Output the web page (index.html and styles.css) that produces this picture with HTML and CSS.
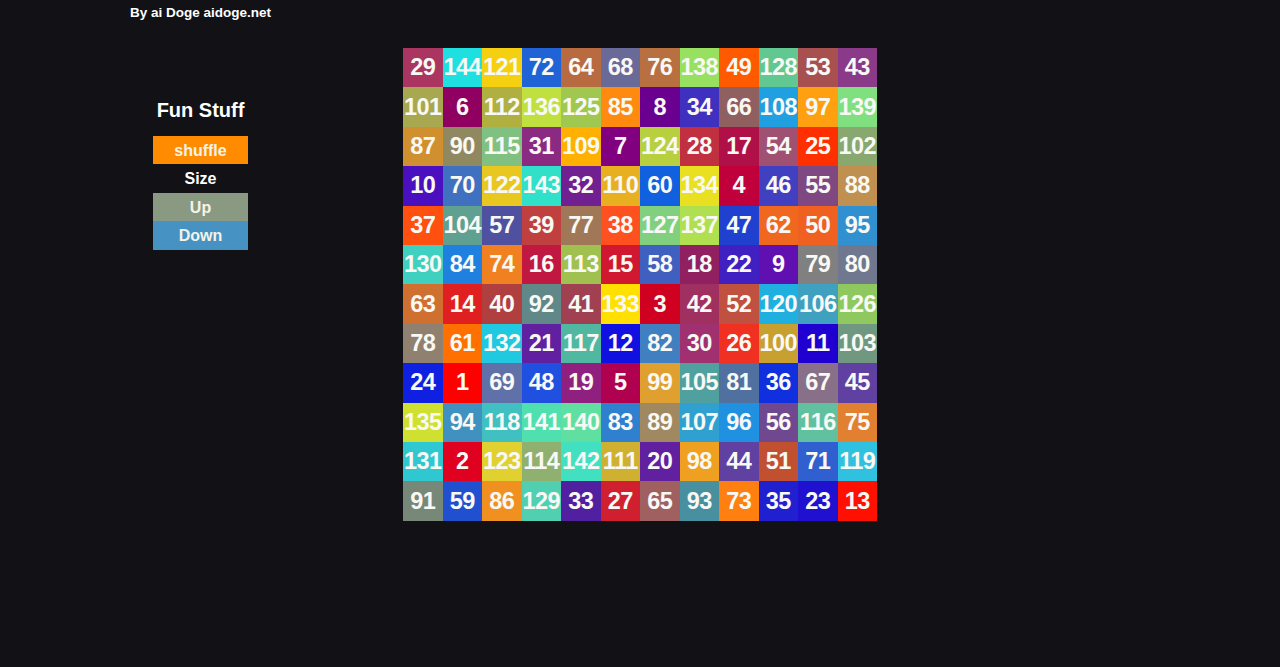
FILE: index.html
```html
<!DOCTYPE html>
<html>
<head>
<meta charset="utf-8">
<link rel="stylesheet" href="styles.css">
</head>
<body>
<div class="header">By ai Doge aidoge.net</div>
<div class="main">
  <div class="sidebar">
    <div class="title">Fun Stuff</div>
    <div class="btn shuffle">shuffle</div>
    <div class="label">Size</div>
    <div class="btn up">Up</div>
    <div class="btn down">Down</div>
  </div>
  <div class="grid">
    <div class="cell" style="background:#a93560">29</div>
    <div class="cell" style="background:#1ee0e0">144</div>
    <div class="cell" style="background:#f5d010">121</div>
    <div class="cell" style="background:#1f63d6">72</div>
    <div class="cell" style="background:#b86a40">64</div>
    <div class="cell" style="background:#6a6a98">68</div>
    <div class="cell" style="background:#b87040">76</div>
    <div class="cell" style="background:#98e060">138</div>
    <div class="cell" style="background:#ff5a00">49</div>
    <div class="cell" style="background:#60c890">128</div>
    <div class="cell" style="background:#a85050">53</div>
    <div class="cell" style="background:#8a3a88">43</div>

    <div class="cell" style="background:#a8a850">101</div>
    <div class="cell" style="background:#900060">6</div>
    <div class="cell" style="background:#b0b040">112</div>
    <div class="cell" style="background:#c0e040">136</div>
    <div class="cell" style="background:#a0c850">125</div>
    <div class="cell" style="background:#ff8a10">85</div>
    <div class="cell" style="background:#6a0090">8</div>
    <div class="cell" style="background:#4030c0">34</div>
    <div class="cell" style="background:#906060">66</div>
    <div class="cell" style="background:#20a0e0">108</div>
    <div class="cell" style="background:#ffa010">97</div>
    <div class="cell" style="background:#80e080">139</div>

    <div class="cell" style="background:#d09030">87</div>
    <div class="cell" style="background:#908860">90</div>
    <div class="cell" style="background:#80c080">115</div>
    <div class="cell" style="background:#8a2a80">31</div>
    <div class="cell" style="background:#ffb000">109</div>
    <div class="cell" style="background:#800080">7</div>
    <div class="cell" style="background:#b8d040">124</div>
    <div class="cell" style="background:#c03040">28</div>
    <div class="cell" style="background:#b01048">17</div>
    <div class="cell" style="background:#a05070">54</div>
    <div class="cell" style="background:#ff3000">25</div>
    <div class="cell" style="background:#88a870">102</div>

    <div class="cell" style="background:#4a10c0">10</div>
    <div class="cell" style="background:#4070c0">70</div>
    <div class="cell" style="background:#e8c820">122</div>
    <div class="cell" style="background:#30e0c8">143</div>
    <div class="cell" style="background:#702090">32</div>
    <div class="cell" style="background:#e8b020">110</div>
    <div class="cell" style="background:#1060e0">60</div>
    <div class="cell" style="background:#e8e020">134</div>
    <div class="cell" style="background:#c0003a">4</div>
    <div class="cell" style="background:#4040c0">46</div>
    <div class="cell" style="background:#804880">55</div>
    <div class="cell" style="background:#c09050">88</div>

    <div class="cell" style="background:#ff5010">37</div>
    <div class="cell" style="background:#60a090">104</div>
    <div class="cell" style="background:#5050a0">57</div>
    <div class="cell" style="background:#c04040">39</div>
    <div class="cell" style="background:#a07858">77</div>
    <div class="cell" style="background:#ff5020">38</div>
    <div class="cell" style="background:#80d080">127</div>
    <div class="cell" style="background:#b0e050">137</div>
    <div class="cell" style="background:#2040d0">47</div>
    <div class="cell" style="background:#f06820">62</div>
    <div class="cell" style="background:#f06020">50</div>
    <div class="cell" style="background:#3090d0">95</div>

    <div class="cell" style="background:#40d0c0">130</div>
    <div class="cell" style="background:#2080e0">84</div>
    <div class="cell" style="background:#f08020">74</div>
    <div class="cell" style="background:#c01840">16</div>
    <div class="cell" style="background:#a0c050">113</div>
    <div class="cell" style="background:#d01830">15</div>
    <div class="cell" style="background:#4060c0">58</div>
    <div class="cell" style="background:#902060">18</div>
    <div class="cell" style="background:#4020c0">22</div>
    <div class="cell" style="background:#6010b0">9</div>
    <div class="cell" style="background:#808080">79</div>
    <div class="cell" style="background:#707890">80</div>

    <div class="cell" style="background:#d07030">63</div>
    <div class="cell" style="background:#e02020">14</div>
    <div class="cell" style="background:#b04040">40</div>
    <div class="cell" style="background:#608888">92</div>
    <div class="cell" style="background:#a04050">41</div>
    <div class="cell" style="background:#ffe000">133</div>
    <div class="cell" style="background:#d00020">3</div>
    <div class="cell" style="background:#a03060">42</div>
    <div class="cell" style="background:#c05040">52</div>
    <div class="cell" style="background:#20b0e0">120</div>
    <div class="cell" style="background:#40a0c0">106</div>
    <div class="cell" style="background:#90c860">126</div>

    <div class="cell" style="background:#908070">78</div>
    <div class="cell" style="background:#ff7000">61</div>
    <div class="cell" style="background:#20c8e0">132</div>
    <div class="cell" style="background:#6020a0">21</div>
    <div class="cell" style="background:#50b8a0">117</div>
    <div class="cell" style="background:#1010e0">12</div>
    <div class="cell" style="background:#4080c0">82</div>
    <div class="cell" style="background:#a03070">30</div>
    <div class="cell" style="background:#f03020">26</div>
    <div class="cell" style="background:#c8a030">100</div>
    <div class="cell" style="background:#2000d0">11</div>
    <div class="cell" style="background:#709880">103</div>

    <div class="cell" style="background:#1020e0">24</div>
    <div class="cell" style="background:#ff0000">1</div>
    <div class="cell" style="background:#6070a8">69</div>
    <div class="cell" style="background:#2050e0">48</div>
    <div class="cell" style="background:#902080">19</div>
    <div class="cell" style="background:#b00050">5</div>
    <div class="cell" style="background:#e0a030">99</div>
    <div class="cell" style="background:#50a0a0">105</div>
    <div class="cell" style="background:#5070a0">81</div>
    <div class="cell" style="background:#1030e0">36</div>
    <div class="cell" style="background:#887088">67</div>
    <div class="cell" style="background:#6040a0">45</div>

    <div class="cell" style="background:#d0e030">135</div>
    <div class="cell" style="background:#4090c0">94</div>
    <div class="cell" style="background:#40c0c0">118</div>
    <div class="cell" style="background:#50e0b0">141</div>
    <div class="cell" style="background:#60e0a0">140</div>
    <div class="cell" style="background:#3080d0">83</div>
    <div class="cell" style="background:#a08860">89</div>
    <div class="cell" style="background:#30a0d0">107</div>
    <div class="cell" style="background:#2090e0">96</div>
    <div class="cell" style="background:#704890">56</div>
    <div class="cell" style="background:#60c0a0">116</div>
    <div class="cell" style="background:#e08030">75</div>

    <div class="cell" style="background:#30c8d0">131</div>
    <div class="cell" style="background:#e00020">2</div>
    <div class="cell" style="background:#e0d030">123</div>
    <div class="cell" style="background:#90b070">114</div>
    <div class="cell" style="background:#40e0c0">142</div>
    <div class="cell" style="background:#d0b030">111</div>
    <div class="cell" style="background:#6020a0">20</div>
    <div class="cell" style="background:#f0a020">98</div>
    <div class="cell" style="background:#6040a0">44</div>
    <div class="cell" style="background:#c05030">51</div>
    <div class="cell" style="background:#3060d0">71</div>
    <div class="cell" style="background:#30c0e0">119</div>

    <div class="cell" style="background:#788878">91</div>
    <div class="cell" style="background:#2050d0">59</div>
    <div class="cell" style="background:#f09020">86</div>
    <div class="cell" style="background:#50d0b0">129</div>
    <div class="cell" style="background:#5020a0">33</div>
    <div class="cell" style="background:#d02030">27</div>
    <div class="cell" style="background:#a06060">65</div>
    <div class="cell" style="background:#4890a0">93</div>
    <div class="cell" style="background:#ff8010">73</div>
    <div class="cell" style="background:#2020d0">35</div>
    <div class="cell" style="background:#2010d0">23</div>
    <div class="cell" style="background:#ff1000">13</div>
  </div>
</div>
</body>
</html>
```

FILE: styles.css
```css
html, body {
  margin: 0;
  padding: 0;
  background: #111116;
  font-family: "Liberation Sans", Arial, sans-serif;
  color: #ffffff;
}

.header {
  height: 26px;
  line-height: 26px;
  padding-left: 130px;
  font-size: 13.5px;
  font-weight: bold;
}

.main {
  display: flex;
  margin-top: 22px;
  padding-left: 153px;
}

.sidebar {
  width: 95px;
  display: flex;
  flex-direction: column;
  text-align: center;
}

.title {
  margin-top: 50px;
  line-height: 24px;
  font-size: 20px;
  font-weight: bold;
  margin-bottom: 14px;
}

.btn {
  height: 28px;
  line-height: 30px;
  font-size: 16px;
  font-weight: bold;
  color: #f6f2e6;
}

.shuffle {
  background: #ff8c00;
}

.label {
  height: 29px;
  line-height: 30px;
  font-size: 16px;
  font-weight: bold;
}

.up {
  background: #8a9a82;
}

.down {
  background: #4692c2;
  height: 29px;
}

.grid {
  margin-left: 155px;
  display: grid;
  grid-template-columns: repeat(12, 39.5px);
  grid-auto-rows: 39.42px;
  width: 474px;
}

.cell {
  display: flex;
  align-items: center;
  justify-content: center;
  font-size: 23.5px;
  font-weight: bold;
  color: #f8f8f4;
  letter-spacing: -0.6px;
  overflow: hidden;
  white-space: nowrap;
}
```
